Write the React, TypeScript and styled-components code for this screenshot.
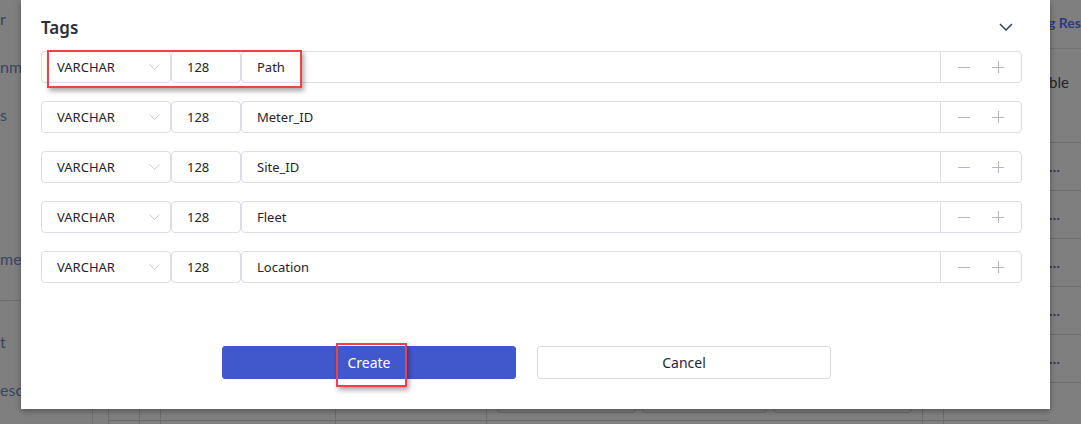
import React from 'react'
import styled, { createGlobalStyle } from 'styled-components'

const GlobalStyle = createGlobalStyle`
  html, body {
    margin: 0;
    padding: 0;
    background: #7f7f7f;
  }
  * {
    box-sizing: border-box;
  }
`

const Page = styled.div`
  position: relative;
  width: 1081px;
  height: 424px;
  overflow: hidden;
  display: flex;
  background: #7f7f7f;
  font-family: Lato, "Liberation Sans", sans-serif;
`

const Sidebar = styled.nav`
  flex: 0 0 93px;
  margin-top: -6px;
  border-right: 1px solid #6f6f6f;
  display: flex;
  flex-direction: column;
`

const NavItem = styled.div`
  height: 48px;
  display: flex;
  align-items: center;
  font-size: 16px;
  color: #3a4462;
  white-space: nowrap;
`

const NavDivider = styled.div`
  margin: 18px 0 16px;
  border-top: 1px solid #6c6c6c;
`

const Main = styled.div`
  flex: 1;
  display: flex;
  flex-direction: column;
  min-width: 0;
`

const TopBar = styled.div`
  height: 49px;
  flex: 0 0 49px;
  border-bottom: 1px solid #707070;
  display: flex;
  align-items: center;
  padding-left: 955px;
  padding-bottom: 4px;
`

const TopLink = styled.span`
  font-size: 14px;
  font-weight: 700;
  color: #2f3a78;
  white-space: nowrap;
`

const Body = styled.div`
  flex: 1;
  display: flex;
`

const LeftPanel = styled.div`
  flex: 0 0 956px;
  padding-left: 15px;
  display: flex;
  flex-direction: column;
`

const Card = styled.div`
  flex: 1;
  border-left: 1px solid #6d6d6d;
  display: flex;
  flex-direction: column;
`

const CardSpacer = styled.div`
  height: 331px;
`

const GridRow = styled.div<{ $h: number }>`
  height: ${p => p.$h}px;
  display: grid;
  grid-template-columns: 31px 17px 179px 151px 436px 16px 1fr;
  border-bottom: 1px solid #6c6c6c;
`

const GridCell = styled.div`
  border-right: 1px solid #6d6d6d;
  display: flex;
  align-items: flex-end;
  gap: 6px;
  padding: 0 10px 7px;

  &:last-child {
    border-right: none;
  }
`

const GhostButton = styled.div<{ $w: number }>`
  width: ${p => p.$w}px;
  height: 30px;
  border: 1px solid #6a6a6a;
  border-radius: 4px;
`

const RightCol = styled.div`
  flex: 1;
  display: flex;
  flex-direction: column;
`

const HeadCell = styled.div`
  height: 94px;
  padding-top: 24px;
  border-bottom: 1px solid #6e6e6e;
  font-size: 15px;
  color: #242424;
  white-space: nowrap;
`

const DataCell = styled.div`
  height: 48px;
  flex: 0 0 48px;
  border-bottom: 1px solid #6e6e6e;
  display: flex;
  align-items: center;
  font-size: 14px;
  font-weight: 700;
  color: #2c3958;
`

/* modal */

const Modal = styled.div`
  position: absolute;
  left: 21px;
  top: 0;
  width: 1029px;
  height: 409px;
  background: #fff;
  box-shadow: 0 2px 6px rgba(0, 0, 0, 0.35);
  padding: 0 28px 0 20px;
  display: flex;
  flex-direction: column;
  color: #1f2430;
  font-family: "Noto Sans", "Liberation Sans", sans-serif;
`

const Header = styled.div`
  height: 51px;
  display: flex;
  align-items: center;
  justify-content: space-between;
  padding-top: 3px;
`

const Title = styled.h2`
  margin: 0;
  font-size: 17px;
  font-weight: 600;
  color: #2b2f3a;
`

const Collapse = styled.button`
  border: none;
  background: none;
  padding: 0;
  margin-right: 9px;
  display: flex;
  color: #33405f;
`

const TagList = styled.div`
  display: flex;
  flex-direction: column;
  gap: 18px;
`

const Row = styled.div`
  position: relative;
  height: 32px;
  display: flex;
  font-size: 13px;
`

const Box = styled.div<{ $w?: number }>`
  flex: ${p => (p.$w ? `0 0 ${p.$w}px` : '1')};
  border: 1px solid #dcdde5;
  border-radius: 4px;
  display: flex;
  align-items: center;
  padding-left: 15px;
`

const SelectBox = styled(Box)`
  justify-content: space-between;
  padding-right: 10px;
`

const NameGroup = styled.div`
  flex: 1;
  border: 1px solid #dcdde5;
  border-radius: 4px;
  display: flex;
`

const NameInput = styled.div`
  flex: 1;
  display: flex;
  align-items: center;
  padding-left: 15px;
`

const Actions = styled.div`
  flex: 0 0 81px;
  border-left: 1px solid #dcdde5;
  display: flex;
  align-items: center;
  justify-content: space-between;
  padding: 0 17px 0 17px;
  color: #b4b5be;
`

const Highlight = styled.div<{ $l: number; $t: number; $w: number; $h: number }>`
  position: absolute;
  left: ${p => p.$l}px;
  top: ${p => p.$t}px;
  width: ${p => p.$w}px;
  height: ${p => p.$h}px;
  border: 2px solid #ef4146;
  box-shadow: 2px 3px 5px rgba(0, 0, 0, 0.35);
  pointer-events: none;
`

const Footer = styled.div`
  margin-top: 63px;
  padding-left: 181px;
  display: flex;
  gap: 21px;
`

const Button = styled.button<{ $primary?: boolean }>`
  position: relative;
  width: 294px;
  height: 33px;
  border-radius: 3px;
  font-family: inherit;
  font-size: 14px;
  border: 1px solid ${p => (p.$primary ? '#4158cc' : '#d9dae3')};
  background: ${p => (p.$primary ? '#4158cc' : '#fff')};
  color: ${p => (p.$primary ? '#fff' : '#1f2430')};
`

const ChevronSmall = () => (
  <svg width="11" height="6" viewBox="0 0 11 6" fill="none">
    <path d="M0.5 0.5 L5.5 5.3 L10.5 0.5" stroke="#c4c5ce" strokeWidth="1" />
  </svg>
)

const ChevronTitle = () => (
  <svg width="14" height="8" viewBox="0 0 14 8" fill="none">
    <path d="M1 1 L7 7 L13 1" stroke="currentColor" strokeWidth="1.5" />
  </svg>
)

const Minus = () => (
  <svg width="12" height="12" viewBox="0 0 12 12">
    <path d="M0 6.5 H12" stroke="currentColor" strokeWidth="1" />
  </svg>
)

const Plus = () => (
  <svg width="12" height="12" viewBox="0 0 12 12">
    <path d="M0 6.5 H12 M6.5 0 V12" stroke="currentColor" strokeWidth="1" />
  </svg>
)

const tags = ['Path', 'Meter_ID', 'Site_ID', 'Fleet', 'Location']
const navTop = ['r', 'nmi', 's', '', '', 'me']
const navBottom = ['t', 'esc']

export default function App() {
  return (
    <Page>
      <GlobalStyle />
      <Sidebar>
        {navTop.map((n, i) => (
          <NavItem key={i}>{n}</NavItem>
        ))}
        <NavDivider />
        {navBottom.map((n, i) => (
          <NavItem key={i}>{n}</NavItem>
        ))}
      </Sidebar>
      <Main>
        <TopBar>
          <TopLink>g Res</TopLink>
        </TopBar>
        <Body>
          <LeftPanel>
            <Card>
              <CardSpacer />
              <GridRow $h={41}>
                <GridCell />
                <GridCell />
                <GridCell />
                <GridCell />
                <GridCell>
                  <GhostButton $w={139} />
                  <GhostButton $w={125} />
                  <GhostButton $w={139} />
                </GridCell>
                <GridCell />
                <GridCell />
              </GridRow>
              <GridRow $h={20}>
                <GridCell />
                <GridCell />
                <GridCell />
                <GridCell />
                <GridCell />
                <GridCell />
                <GridCell />
              </GridRow>
            </Card>
          </LeftPanel>
          <RightCol>
            <HeadCell>ble</HeadCell>
            {[0, 1, 2, 3, 4, 5].map(i => (
              <DataCell key={i}>{i < 5 ? '…' : ''}</DataCell>
            ))}
          </RightCol>
        </Body>
      </Main>

      <Modal>
        <Header>
          <Title>Tags</Title>
          <Collapse>
            <ChevronTitle />
          </Collapse>
        </Header>
        <TagList>
          {tags.map((t, i) => (
            <Row key={t}>
              <SelectBox $w={130}>
                VARCHAR
                <ChevronSmall />
              </SelectBox>
              <Box $w={70}>128</Box>
              <NameGroup>
                <NameInput>{t}</NameInput>
                <Actions>
                  <Minus />
                  <Plus />
                </Actions>
              </NameGroup>
              {i === 0 && <Highlight $l={6} $t={-1} $w={255} $h={38} />}
            </Row>
          ))}
        </TagList>
        <Footer>
          <Button $primary>
            Create
            <Highlight $l={113} $t={-4} $w={71} $h={44} />
          </Button>
          <Button>Cancel</Button>
        </Footer>
      </Modal>
    </Page>
  )
}
